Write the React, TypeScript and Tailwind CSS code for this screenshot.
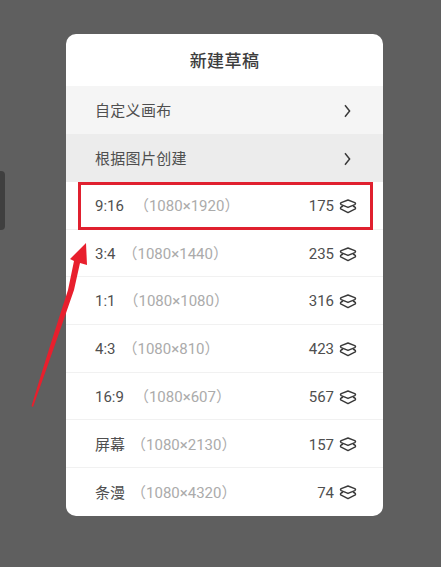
const FONT = "font-['Roboto','Noto_Sans_CJK_SC',sans-serif]";

const sizes = [
  { name: "9:16", dim: "（1080×1920）", count: 175, dimClass: "ml-[10px]" },
  { name: "3:4", dim: "（1080×1440）", count: 235, dimClass: "ml-[7px]" },
  { name: "1:1", dim: "（1080×1080）", count: 316, dimClass: "ml-[8px]" },
  { name: "4:3", dim: "（1080×810）", count: 423, dimClass: "ml-[7px]" },
  { name: "16:9", dim: "（1080×607）", count: 567, dimClass: "ml-[10px]" },
  { name: "屏幕", dim: "（1080×2130）", count: 157, dimClass: "ml-[6px]" },
  { name: "条漫", dim: "（1080×4320）", count: 74, dimClass: "ml-[6px]" },
];

function Layers() {
  return (
    <svg width="18" height="15" viewBox="0 0 18 15" fill="none" stroke="#3a3a3a" strokeWidth="1.5" strokeLinejoin="round" className="ml-[5px]">
      <path d="M9 1 L15.8 3.6 Q17.2 4.6 15.8 5.6 L9 8.4 L2.2 5.6 Q0.8 4.6 2.2 3.6 Z" />
      <path d="M4 7 L2.2 8 Q0.8 9.2 2.2 10.2 L9 13.6 L15.8 10.2 Q17.2 9.2 15.8 8 L14 7" />
    </svg>
  );
}

function Chevron() {
  return (
    <svg width="7" height="14" viewBox="0 0 7 14" fill="none" stroke="#3a3a3a" strokeWidth="1.5">
      <path d="M1 1.2 L5.6 7 L1 12.8" />
    </svg>
  );
}

function LinkRow({ label, bg }: { label: string; bg: string }) {
  return (
    <div className={`flex h-12 items-center justify-between pl-[29px] pr-[32px] pt-[2px] ${bg}`}>
      <span className="text-[15px] tracking-[0.3px] text-[#4f4f4f]">{label}</span>
      <Chevron />
    </div>
  );
}

export default function App() {
  return (
    <div className={`relative h-[567px] w-[441px] overflow-hidden bg-[#5f5f5f] pl-[66px] pt-[34px] ${FONT}`}>
      {/* 左端のタブ */}
      <div className="absolute left-0 top-[171px] h-[59px] w-[5px] rounded-r bg-[#3f3f3f]" />

      <div className="w-[317px] overflow-hidden rounded-[10px] bg-white">
        <div className="flex h-[52px] items-center justify-center pt-[3px] text-[17px] font-medium tracking-[0.4px] text-[#3d3d3d]">
          新建草稿
        </div>
        <LinkRow label="自定义画布" bg="bg-[#f5f5f5]" />
        <LinkRow label="根据图片创建" bg="bg-[#ececec]" />
        {sizes.map((s, i) => (
          <div
            key={s.name}
            className={`flex h-[47.7px] items-center pl-[29px] pr-[26px] pt-[2px] ${i < sizes.length - 1 ? "border-b border-[#f1f1f1]" : ""}`}
          >
            <span className="text-[15px] text-[#4f4f4f]">{s.name}</span>
            <span className={`text-[15px] text-[#ababab] ${s.dimClass}`}>{s.dim}</span>
            <span className="ml-auto text-[15px] text-[#4f4f4f]">{s.count}</span>
            <Layers />
          </div>
        ))}
      </div>

      {/* 赤い注釈 */}
      <div className="absolute left-[78px] top-[182px] h-[48px] w-[295px] border-[3px] border-[#e0202f]" />
      <svg className="absolute left-0 top-0" width="441" height="567" viewBox="0 0 441 567" fill="#e81f2d">
        <path d="M31.5 406 Q50 345 68 290 L74 261 L70 259 L86 243 L87 265 L80 263 L74 290 Q55 345 33 407 Z" />
      </svg>
    </div>
  );
}
